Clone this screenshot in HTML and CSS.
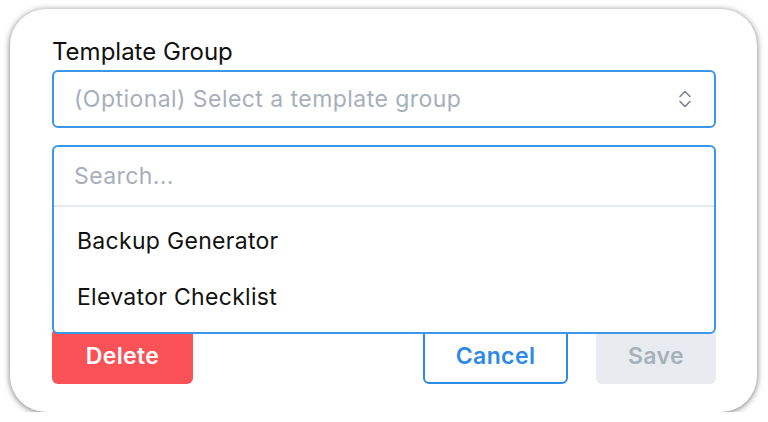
FILE: index.html
```html
<!DOCTYPE html>
<html lang="en">
<head>
  <meta charset="UTF-8" />
  <meta name="viewport" content="width=device-width, initial-scale=1.0"/>
  <title>Template Group</title>
  <link rel="stylesheet" href="styles.css">
</head>
<body>

  <div class="card">
    <div class="field">
      <label class="field-label">Template Group</label>
      <div class="select">
        <span class="select-placeholder">(Optional) Select a template group</span>
        <svg class="chevrons" width="14" height="20" viewBox="0 0 14 20" fill="none" stroke="#7a828e" stroke-width="1.6" stroke-linecap="round" stroke-linejoin="round">
          <path d="M2 7.5 L7 2.5 L12 7.5" />
          <path d="M2 12.5 L7 17.5 L12 12.5" />
        </svg>
      </div>

      <div class="dropdown">
        <div class="dropdown-search">Search...</div>
        <ul class="dropdown-list">
          <li>Backup Generator</li>
          <li>Elevator Checklist</li>
        </ul>
      </div>
    </div>

    <div class="spacer"></div>

    <div class="actions">
      <button class="btn btn-delete">Delete</button>
      <button class="btn btn-cancel">Cancel</button>
      <button class="btn btn-save">Save</button>
    </div>
  </div>

</body>
</html>
```

FILE: styles.css
```css
body {
  margin: 0;
  padding: 0;
  background-color: #ffffff;
  font-family: Inter, "Noto Sans", Arial, sans-serif;
}

.card {
  box-sizing: border-box;
  width: 747px;
  height: 403px;
  margin: 9px 0 0 10px;
  padding: 29px 41px 28px 42px;
  background-color: #ffffff;
  border-radius: 36px;
  box-shadow: 0 1px 6px rgba(0, 0, 0, 0.55);
  display: flex;
  flex-direction: column;
}

.field {
  position: relative;
}

.field-label {
  display: block;
  font-size: 24px;
  line-height: 28px;
  color: #111111;
  margin-bottom: 4px;
}

.select {
  box-sizing: border-box;
  height: 58px;
  border: 2px solid #3c96ea;
  border-radius: 6px;
  padding: 0 22px 0 20px;
  display: flex;
  align-items: center;
  justify-content: space-between;
}

.select-placeholder {
  font-size: 23px;
  letter-spacing: 0.45px;
  color: #a6afba;
}

.dropdown {
  position: absolute;
  top: 107px;
  left: 0;
  right: 0;
  box-sizing: border-box;
  height: 189px;
  background-color: #ffffff;
  border: 2px solid #3c96ea;
  border-radius: 6px;
  z-index: 2;
}

.dropdown-search {
  height: 58px;
  line-height: 58px;
  padding-left: 20px;
  font-size: 23px;
  letter-spacing: 0.4px;
  color: #a6afba;
  border-bottom: 2px solid #e6eaee;
}

.dropdown-list {
  list-style: none;
  margin: 0;
  padding: 6px 0 0 0;
}

.dropdown-list li {
  height: 56px;
  line-height: 56px;
  padding-left: 23px;
  font-size: 23px;
  letter-spacing: 0.3px;
  color: #111111;
}

.spacer {
  flex: 1;
}

.actions {
  display: flex;
  gap: 28px;
}

.btn {
  box-sizing: border-box;
  height: 56px;
  border-radius: 6px;
  font-family: Inter, "Noto Sans", Arial, sans-serif;
  font-size: 23px;
  letter-spacing: 0.4px;
  font-weight: 600;
  border: none;
  cursor: pointer;
}

.btn-delete {
  width: 141px;
  background-color: #fa5256;
  color: #ffffff;
}

.btn-cancel {
  width: 145px;
  margin-left: auto;
  background-color: #ffffff;
  border: 2px solid #2d8ae6;
  color: #2d8ae6;
}

.btn-save {
  width: 120px;
  background-color: #e8ebef;
  color: #a7b1bc;
}
```
